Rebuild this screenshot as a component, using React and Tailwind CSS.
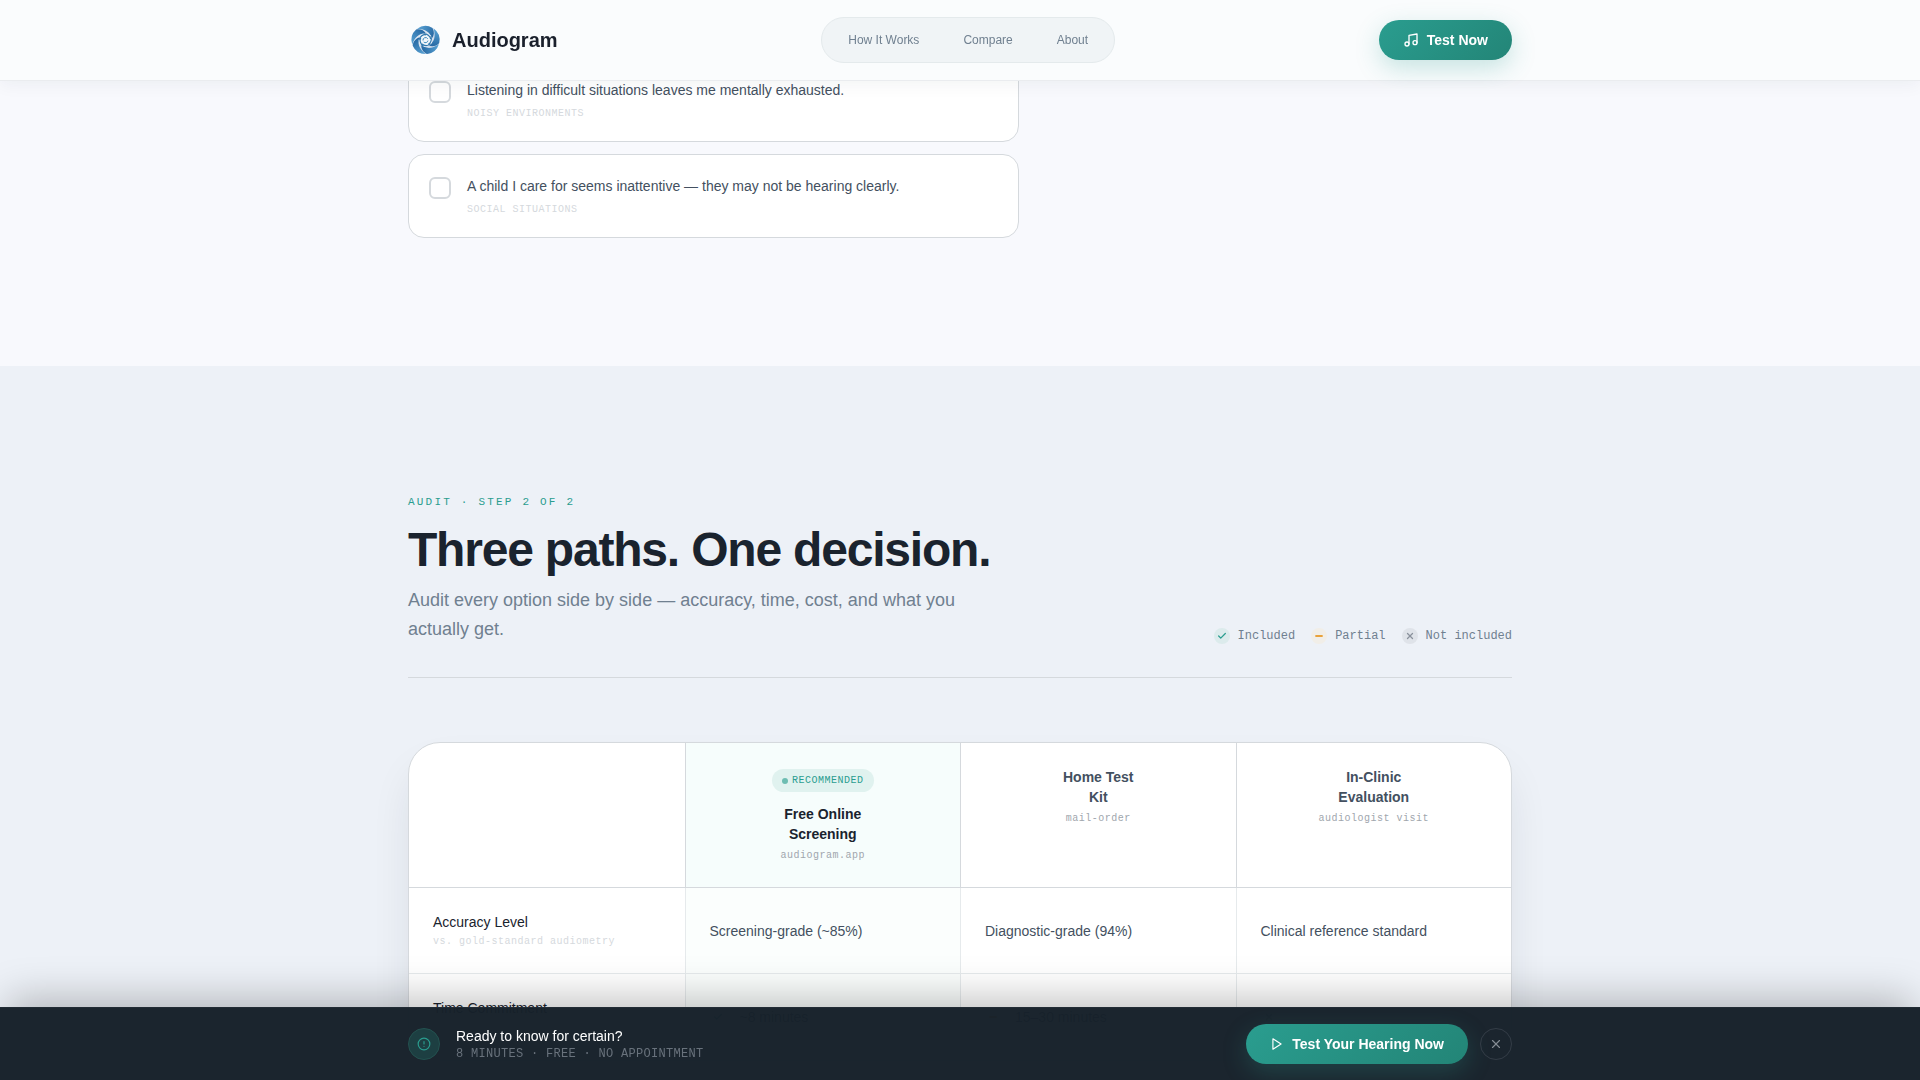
import { CircleAlert, Check, Minus, Music, X } from "lucide-react";

const navLinks = [
  { label: "How It Works", href: "#how-it-works" },
  { label: "Compare", href: "#compare" },
  { label: "About", href: "#about" },
];

const symptoms = [
  { id: "exhausted", text: "Listening in difficult situations leaves me mentally exhausted.", tag: "Noisy environments" },
  { id: "child", text: "A child I care for seems inattentive — they may not be hearing clearly.", tag: "Social situations" },
];

const options = [
  { title: ["Free Online", "Screening"], note: "audiogram.app", recommended: true },
  { title: ["Home Test", "Kit"], note: "mail-order" },
  { title: ["In-Clinic", "Evaluation"], note: "audiologist visit" },
];

const rows = [
  {
    name: "Accuracy Level",
    note: "vs. gold-standard audiometry",
    values: [{ text: "Screening-grade (~85%)" }, { text: "Diagnostic-grade (94%)" }, { text: "Clinical reference standard" }],
  },
  {
    name: "Time Commitment",
    values: [
      { text: "~8 minutes", status: "included" },
      { text: "15–30 minutes", status: "partial" },
      { text: "", status: "missing" },
    ],
  },
];

const statusStyles = {
  included: { Icon: Check, stroke: 3, className: "bg-[#dcebec] text-[#2a9d8f]" },
  partial: { Icon: Minus, stroke: 5, className: "bg-[#f1eee8] text-[#e9a23b]" },
  missing: { Icon: X, stroke: 3, className: "bg-[#dfe3e9] text-[#8a919c]" },
};

function StatusDot({ status }) {
  const { Icon, stroke, className } = statusStyles[status];
  return (
    <span className={`flex size-4 shrink-0 items-center justify-center rounded-full ${className}`}>
      <Icon size={10} strokeWidth={stroke} />
    </span>
  );
}

const bladeAngles = [-20, 52, 124, 196, 268];

function Logo() {
  return (
    <svg viewBox="-17.5 -18 36 36" className="size-9" aria-hidden="true">
      <defs>
        <linearGradient id="blade" x1="0" y1="0" x2="1" y2="1">
          <stop offset="0" stopColor="#5aa5d6" />
          <stop offset="1" stopColor="#1f5f9b" />
        </linearGradient>
        <linearGradient id="rim" x1="0" y1="0" x2="1" y2="1">
          <stop offset="0" stopColor="#e6edf6" />
          <stop offset="1" stopColor="#c6d3e6" />
        </linearGradient>
      </defs>
      <circle r="14" fill="url(#rim)" />
      {bladeAngles.map((angle) => (
        <path key={angle} d="M-4 -13.400A14 14 0 0 1 10.700 -9C11.500 -5 10 -1.500 6.200 1C7.500 -5.500 3.500 -10.500 -4 -13.400Z" fill="url(#blade)" transform={`rotate(${angle})`} />
      ))}
      <circle r="6.800" fill="#f2f6fa" />
      {bladeAngles.map((angle) => (
        <path key={angle} d="M-2.500 -6C1 -6.500 4.500 -4.500 5 -1.500" fill="none" stroke="#3178ad" strokeWidth="1.200" transform={`rotate(${angle + 25})`} />
      ))}
      <path d="M-2.500 0.500A2.600 2.600 0 0 1 2.300 -1.200M2.500 0.600A2.600 2.600 0 0 1 -1.800 2" fill="none" stroke="#3f8bbb" strokeWidth="1" />
    </svg>
  );
}

function Header() {
  return (
    <header className="fixed inset-x-0 top-0 z-20 border-b border-[#eaecef] bg-[#fafcfd] shadow-[0_4px_16px_rgba(26,35,50,0.05)]">
      <div className="mx-auto flex h-20 max-w-[1200px] items-center justify-between px-12">
        <a href="#top" className="flex items-center gap-2 text-xl font-bold text-[#1a202c]">
          <Logo />
          Audiogram
        </a>
        <nav className="flex gap-1 rounded-full border border-[#e4eaec] bg-[#f0f4f6] p-1.5">
          {navLinks.map((link) => (
            <a key={link.href} href={link.href} className="rounded-full px-5 py-2 text-xs text-[#708090]">
              {link.label}
            </a>
          ))}
        </nav>
        <button type="button" className="flex h-10 items-center gap-2 rounded-full bg-linear-135 from-[#2a9d8f] to-[#238577] px-6 text-sm font-bold text-white shadow-[0_8px_24px_rgba(42,157,143,0.25)]">
          <Music size={16} />
          Test Now
        </button>
      </div>
    </header>
  );
}

function SymptomList() {
  return (
    <section className="bg-[#f8f9fd]">
      <div className="mx-auto grid max-w-[1200px] gap-16 px-12 pt-[58px] pb-32 lg:grid-cols-[1fr_429px]">
        <div className="flex flex-col gap-3">
          {symptoms.map((item) => (
            <label key={item.id} htmlFor={item.id} className="flex items-start gap-4 rounded-2xl border border-[#d5d9dd] bg-white p-5">
              <input id={item.id} type="checkbox" className="mt-0.5 size-[22px] shrink-0 appearance-none rounded-md border-2 border-[#d5d9dd] bg-white checked:bg-[#2a9d8f]" />
              <span>
                <span className="block text-sm leading-[22px] text-[#435060]">{item.text}</span>
                <span className="mt-1.5 block font-['Liberation_Mono',monospace] text-[10px] leading-[14px] tracking-[0.05em] text-[#d5d9dd] uppercase">{item.tag}</span>
              </span>
            </label>
          ))}
        </div>
      </div>
    </section>
  );
}

function Legend() {
  return (
    <ul className="flex gap-4 font-['Liberation_Mono',monospace] text-xs text-[#708090]">
      <li className="flex items-center gap-2"><StatusDot status="included" />Included</li>
      <li className="flex items-center gap-2"><StatusDot status="partial" />Partial</li>
      <li className="flex items-center gap-2"><StatusDot status="missing" />Not included</li>
    </ul>
  );
}

function CompareTable() {
  return (
    <div className="mt-16 overflow-hidden rounded-[32px] border border-[#d5d9dd] bg-white shadow-[0_24px_48px_-12px_rgba(26,35,50,0.14)]">
      <table className="w-full table-fixed border-separate border-spacing-0 text-sm leading-5">
        <thead>
          <tr>
            <td className="border-b border-[#d5d9dd]" />
            {options.map((option) => (
              <th
                key={option.note}
                scope="col"
                className={`border-b border-l border-[#d5d9dd] p-6 text-center align-top font-bold ${option.recommended ? "bg-[#f6fdfc] text-[#1a232e]" : "text-[#435060]"}`}
              >
                {option.recommended ? (
                  <span className="mx-auto mt-0.5 mb-3 flex h-[23px] w-fit items-center gap-1 rounded-full bg-[#e0f2ef] px-2.5 font-['Liberation_Mono',monospace] text-[10px] font-normal tracking-[0.05em] text-[#2a9d8f] uppercase">
                    <span className="size-1.5 rounded-full bg-[#6dbdb2]" />
                    Recommended
                  </span>
                ) : null}
                <span className="block">{option.title[0]}</span>
                <span className="block">{option.title[1]}</span>
                <span className="mt-1 block font-['Liberation_Mono',monospace] text-[10px] leading-[15px] font-normal tracking-[0.05em] text-[#a0a6ad]">{option.note}</span>
              </th>
            ))}
          </tr>
        </thead>
        <tbody>
          {rows.map((row) => (
            <tr key={row.name} className="h-[86px]">
              <th scope="row" className="border-b border-[#e6eaec] p-6 text-left align-top font-normal text-[#1a232e]">
                {row.name}
                {row.note ? (
                  <span className="mt-0.5 block font-['Liberation_Mono',monospace] text-[10px] leading-[15px] tracking-[0.05em] text-[#d5d9dd]">{row.note}</span>
                ) : null}
              </th>
              {row.values.map((value, index) => (
                <td key={index} className={`border-b border-l border-[#e6eaec] px-6 text-[#435060] ${index === 0 ? "bg-[#fbfefd]" : ""}`}>
                  <span className="flex items-center gap-3.5">
                    {value.status ? <StatusDot status={value.status} /> : null}
                    {value.text}
                  </span>
                </td>
              ))}
            </tr>
          ))}
        </tbody>
      </table>
    </div>
  );
}

function Compare() {
  return (
    <section id="compare" className="bg-[#edf1f7] py-32">
      <div className="mx-auto max-w-[1200px] px-12">
        <div className="flex items-end justify-between border-b border-[#d5d9dd] pb-[33px]">
          <div>
            <p className="font-['Liberation_Mono',monospace] text-[11px] leading-4 tracking-[0.2em] text-[#2a9d8f] uppercase">Audit · Step 2 of 2</p>
            <h2 className="mt-3 text-5xl leading-[56px] font-bold tracking-[-0.025em] text-[#1a232e]">Three paths. One decision.</h2>
            <p className="mt-2 max-w-[560px] text-lg leading-[29px] text-[#708090]">
              Audit every option side by side — accuracy, time, cost, and what you actually get.
            </p>
          </div>
          <Legend />
        </div>
        <CompareTable />
      </div>
    </section>
  );
}

function StickyBar() {
  return (
    <div className="fixed inset-x-0 bottom-0 z-20 border-t border-[#222c35] bg-[#16212a]/98 shadow-[0_-16px_40px_-8px_rgba(0,0,0,0.25)]">
      <div className="mx-auto flex max-w-[1200px] items-center justify-between px-12 py-4">
        <div className="flex items-center gap-4">
          <span className="flex size-8 items-center justify-center rounded-full border border-[#23514f] bg-[#1d3f42] text-[#2a9d8f]">
            <CircleAlert size={14} />
          </span>
          <div>
            <p className="text-sm leading-5 text-white">Ready to know for certain?</p>
            <p className="font-['Liberation_Mono',monospace] text-xs leading-4 tracking-wide text-[#69727c] uppercase">8 minutes · Free · No appointment</p>
          </div>
        </div>
        <div className="flex items-center gap-3">
          <button type="button" className="flex h-10 items-center gap-2 rounded-full bg-linear-135 from-[#2a9d8f] to-[#238577] px-6 text-sm font-bold text-white shadow-[0_8px_24px_rgba(42,157,143,0.25)]">
            <svg viewBox="0 0 24 24" className="size-3.5" fill="none" stroke="currentColor" strokeWidth="2" strokeLinejoin="round" aria-hidden="true">
              <polygon points="5 3 19 12 5 21 5 3" />
            </svg>
            Test Your Hearing Now
          </button>
          <button type="button" aria-label="Dismiss" className="flex size-8 items-center justify-center rounded-full border border-[#333c46] text-[#858c94]">
            <X size={14} />
          </button>
        </div>
      </div>
    </div>
  );
}

export default function App() {
  return (
    <div id="top" className="h-screen overflow-hidden bg-[#edf1f7] font-['Liberation_Sans',Arial,sans-serif]">
      <Header />
      <main>
        <SymptomList />
        <Compare />
      </main>
      <StickyBar />
    </div>
  );
}
